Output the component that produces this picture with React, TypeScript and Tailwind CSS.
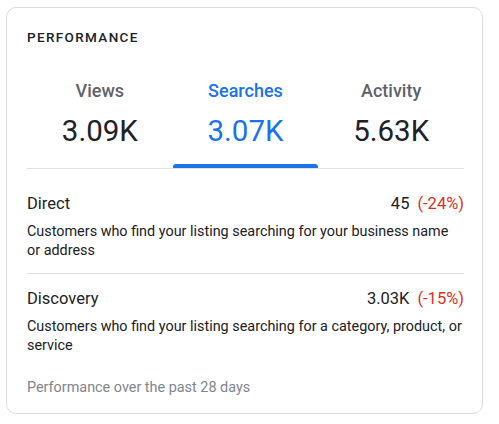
import React from 'react';

const TABS = [
  { label: 'Views', value: '3.09K', active: false },
  { label: 'Searches', value: '3.07K', active: true },
  { label: 'Activity', value: '5.63K', active: false },
];

const ROWS = [
  {
    title: 'Direct',
    value: '45',
    change: '(-24%)',
    text: 'Customers who find your listing searching for your business name or address',
  },
  {
    title: 'Discovery',
    value: '3.03K',
    change: '(-15%)',
    text: 'Customers who find your listing searching for a category, product, or service',
  },
];

export default function App() {
  return (
    <div className="w-[499px] h-[424px] bg-white pl-[6px] pt-[7px] font-['Roboto',sans-serif]">
      <div className="w-[477px] h-[407px] border border-[#dadce0] rounded-[10px] pl-5 pr-[18px] pt-5">
        <div className="text-[13.5px] leading-[18px] font-medium tracking-[0.1em] text-[#202124]">PERFORMANCE</div>

        <div className="grid grid-cols-3 mt-[33px] border-b border-[#e0e0e0]">
          {TABS.map(t => (
            <div key={t.label} className="flex flex-col items-center">
              <div className={`text-[18px] leading-6 font-medium ${t.active ? 'text-[#1a73e8]' : 'text-[#5f6368]'}`}>
                {t.label}
              </div>
              <div className={`mt-[10px] text-[29.5px] leading-9 ${t.active ? 'text-[#1a73e8]' : 'text-[#202124]'}`}>
                {t.value}
              </div>
              <div className={`mt-[15px] h-1 w-full rounded-t-[3px] ${t.active ? 'bg-[#1a73e8]' : 'bg-transparent'}`} />
            </div>
          ))}
        </div>

        {ROWS.map((r, i) => (
          <div
            key={r.title}
            className={i === 0 ? 'pt-[23px] pb-[13px] border-b border-[#e0e0e0]' : 'pt-[13px]'}
          >
            <div className="flex justify-between text-[16.5px] leading-6 text-[#202124]">
              <span>{r.title}</span>
              <span>
                {r.value}
                <span className="ml-2 text-[#d93025]">{r.change}</span>
              </span>
            </div>
            <p className="mt-[6px] text-[14.4px] leading-[19px] text-[#202124]">{r.text}</p>
          </div>
        ))}

        <div className="mt-[23px] text-[14.4px] leading-5 text-[#80868b]">Performance over the past 28 days</div>
      </div>
    </div>
  );
}
